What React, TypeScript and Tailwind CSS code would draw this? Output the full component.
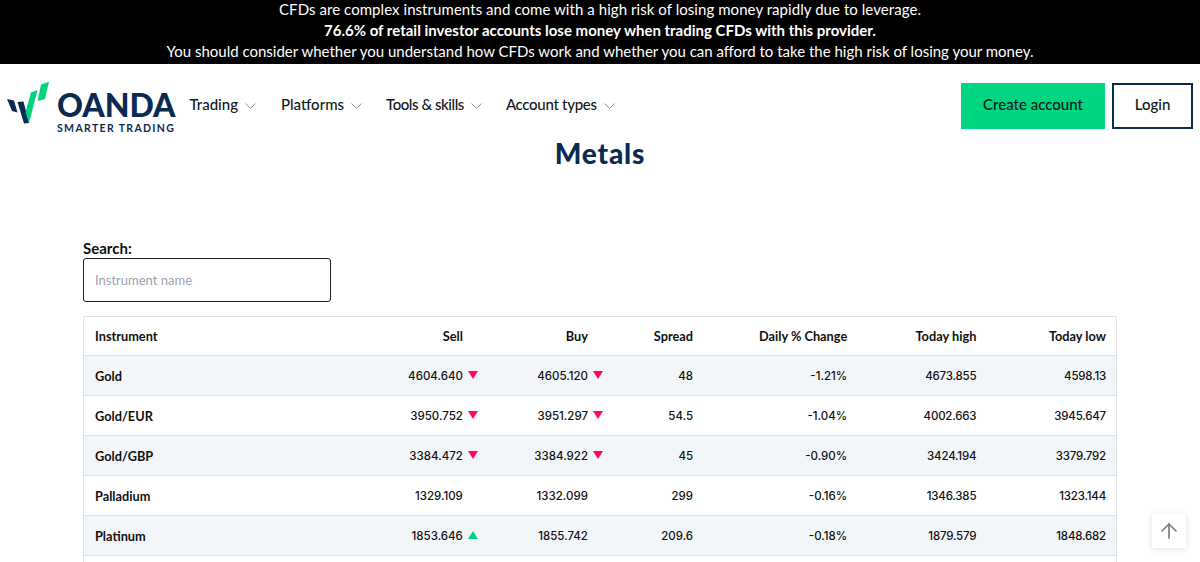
import React from 'react';
import { ArrowUp } from 'lucide-react';

const navItems = [
  { label: 'Trading', cls: 'mr-[25px]' },
  { label: 'Platforms', cls: 'mr-[24px]' },
  { label: 'Tools & skills', cls: 'mr-[24px] tracking-[-0.45px]' },
  { label: 'Account types', cls: 'tracking-[-0.3px]' },
];

type Dir = 'up' | 'down' | null;

const rows: { name: string; sell: string; buy: string; spread: string; change: string; high: string; low: string; sellDir: Dir; buyDir: Dir }[] = [
  { name: 'Gold', sell: '4604.640', buy: '4605.120', spread: '48', change: '-1.21%', high: '4673.855', low: '4598.13', sellDir: 'down', buyDir: 'down' },
  { name: 'Gold/EUR', sell: '3950.752', buy: '3951.297', spread: '54.5', change: '-1.04%', high: '4002.663', low: '3945.647', sellDir: 'down', buyDir: 'down' },
  { name: 'Gold/GBP', sell: '3384.472', buy: '3384.922', spread: '45', change: '-0.90%', high: '3424.194', low: '3379.792', sellDir: 'down', buyDir: 'down' },
  { name: 'Palladium', sell: '1329.109', buy: '1332.099', spread: '299', change: '-0.16%', high: '1346.385', low: '1323.144', sellDir: null, buyDir: null },
  { name: 'Platinum', sell: '1853.646', buy: '1855.742', spread: '209.6', change: '-0.18%', high: '1879.579', low: '1848.682', sellDir: 'up', buyDir: null },
];

const Price = ({ value, dir }: { value: string; dir: Dir }) => (
  <span className="relative inline-block">
    {value}
    {dir === 'down' && (
      <svg viewBox="0 0 10 8" className="absolute left-[calc(100%+5px)] top-[3px] w-[10px] h-[8px]">
        <path d="M0 0H10L5 8Z" fill="#ff0a54" />
      </svg>
    )}
    {dir === 'up' && (
      <svg viewBox="0 0 10 8" className="absolute left-[calc(100%+5px)] top-[3px] w-[10px] h-[8px]">
        <path d="M0 8H10L5 0Z" fill="#00d37f" />
      </svg>
    )}
  </span>
);

const Chevron = () => (
  <svg viewBox="0 0 11 6" className="w-[11px] h-[6px] mt-[3px]" fill="none" stroke="#8a94a6" strokeWidth="1">
    <path d="M0.5 0.5L5.5 5.5L10.5 0.5" />
  </svg>
);

const Logo = () => (
  <div className="flex items-start shrink-0">
    <svg viewBox="0 0 42 43" className="w-[42px] h-[43px] mt-[17px] ml-[7px] shrink-0">
      <path d="M0 18L7 19.5L10.5 31.5L5 30Z" fill="#0b2a52" />
      <path d="M10.5 21L16.5 20.5L22 42L17 42.5Z" fill="#0b2a52" />
      <path d="M24 11.5L30.5 9L22 42L18.5 31Z" fill="#00d37f" />
      <path d="M34 3.5L42 0.7L38 18L30.5 20Z" fill="#00d37f" />
    </svg>
    <div className="flex flex-col mt-[24px] ml-[8px] text-[#0b2a52]">
      <span className="text-[32px] leading-[33px] font-black">OANDA</span>
      <span className="text-[10.5px] leading-[13px] mt-[1px] font-bold tracking-[1.35px] whitespace-nowrap">SMARTER TRADING</span>
    </div>
  </div>
);

export default function App() {
  return (
    <div className="relative h-[562px] overflow-hidden bg-white text-[#111] font-['Lato',sans-serif]">
      <div className="h-[64px] overflow-hidden bg-black text-white text-center text-[15px] leading-[21px]">
        <div className="-mt-[1px]">
          <p className="tracking-[0.06px]">CFDs are complex instruments and come with a high risk of losing money rapidly due to leverage.</p>
          <p className="font-bold">76.6% of retail investor accounts lose money when trading CFDs with this provider.</p>
          <p>You should consider whether you understand how CFDs work and whether you can afford to take the high risk of losing your money.</p>
        </div>
      </div>

      <header className="flex h-[76px] items-start">
        <Logo />
        <nav className="flex items-center ml-[14px] mt-[30px] text-[15px] leading-[20px] font-medium text-[#101820]">
          {navItems.map((item) => (
            <span key={item.label} className={`flex items-center gap-[7px] ${item.cls}`}>
              {item.label}
              <Chevron />
            </span>
          ))}
        </nav>
        <div className="ml-auto mr-[7px] mt-[19px] flex gap-[7px] text-[15px] leading-[20px] font-medium">
          <button className="w-[144px] h-[46px] pb-[5px] bg-[#00d680] text-[#101820]">Create account</button>
          <button className="w-[81px] h-[46px] pb-[5px] border-2 border-[#0b2a52] text-[#101820]">Login</button>
        </div>
      </header>

      <h1 className="-mt-[1px] text-center text-[28px] leading-[28px] font-black tracking-[0.8px] text-[#0b2a52]">Metals</h1>

      <div className="mx-[83px] mt-[73px]">
        <label className="block text-[15px] leading-[16px] font-bold">Search:</label>
        <input
          placeholder="Instrument name"
          className="mt-[2px] block w-[248px] h-[44px] rounded-[3px] border border-[#222] px-[11px] text-[13px] placeholder:text-[#9ca3af] outline-none"
        />
        <table className="mt-[14px] w-[1034px] table-fixed border-collapse border border-[#dfe1e5] text-[11.5px] font-medium font-['Inter',sans-serif]">
          <colgroup>
            <col className="w-[250px]" />
            <col className="w-[139px]" />
            <col className="w-[125px]" />
            <col className="w-[105px]" />
            <col className="w-[154px]" />
            <col className="w-[129px]" />
            <col className="w-[130px]" />
          </colgroup>
          <thead>
            <tr className="h-[39px] border-b border-[#dfe1e5] font-['Lato',sans-serif] text-[12.75px]">
              <th className="pl-[11px] pt-[1px] text-left font-bold">Instrument</th>
              <th className="pr-[10px] pt-[1px] text-right font-bold">Sell</th>
              <th className="pr-[10px] pt-[1px] text-right font-bold">Buy</th>
              <th className="pr-[10px] pt-[1px] text-right font-bold">Spread</th>
              <th className="pr-[10px] pt-[1px] text-right font-bold">Daily % Change</th>
              <th className="pr-[10px] pt-[1px] text-right font-bold">Today high</th>
              <th className="pr-[10px] pt-[1px] text-right font-bold">Today low</th>
            </tr>
          </thead>
          <tbody>
            {rows.map((r, i) => (
              <tr key={r.name} className={`h-[40px] border-b border-[#dfe1e5] ${i % 2 === 0 ? 'bg-[#f3f6f9]' : 'bg-white'}`}>
                <td className="pl-[11px] pt-[2px] text-left text-[12.75px] font-bold font-['Lato',sans-serif]">{r.name}</td>
                <td className="pr-[10px] pt-[2px] text-right"><Price value={r.sell} dir={r.sellDir} /></td>
                <td className="pr-[10px] pt-[2px] text-right"><Price value={r.buy} dir={r.buyDir} /></td>
                <td className="pr-[10px] pt-[2px] text-right">{r.spread}</td>
                <td className="pr-[10px] pt-[2px] text-right">{r.change}</td>
                <td className="pr-[10px] pt-[2px] text-right tracking-[-0.2px]">{r.high}</td>
                <td className="pr-[10px] pt-[2px] text-right tracking-[-0.2px]">{r.low}</td>
              </tr>
            ))}
            <tr className="h-[40px]"><td colSpan={7} /></tr>
          </tbody>
        </table>
      </div>

      <button className="absolute left-[1152px] top-[514px] w-[34px] h-[34px] bg-white flex items-center justify-center shadow-[0_1px_6px_rgba(0,0,0,0.12)]">
        <ArrowUp className="w-[24px] h-[24px] text-[#808080]" strokeWidth={1.75} />
      </button>
    </div>
  );
}
